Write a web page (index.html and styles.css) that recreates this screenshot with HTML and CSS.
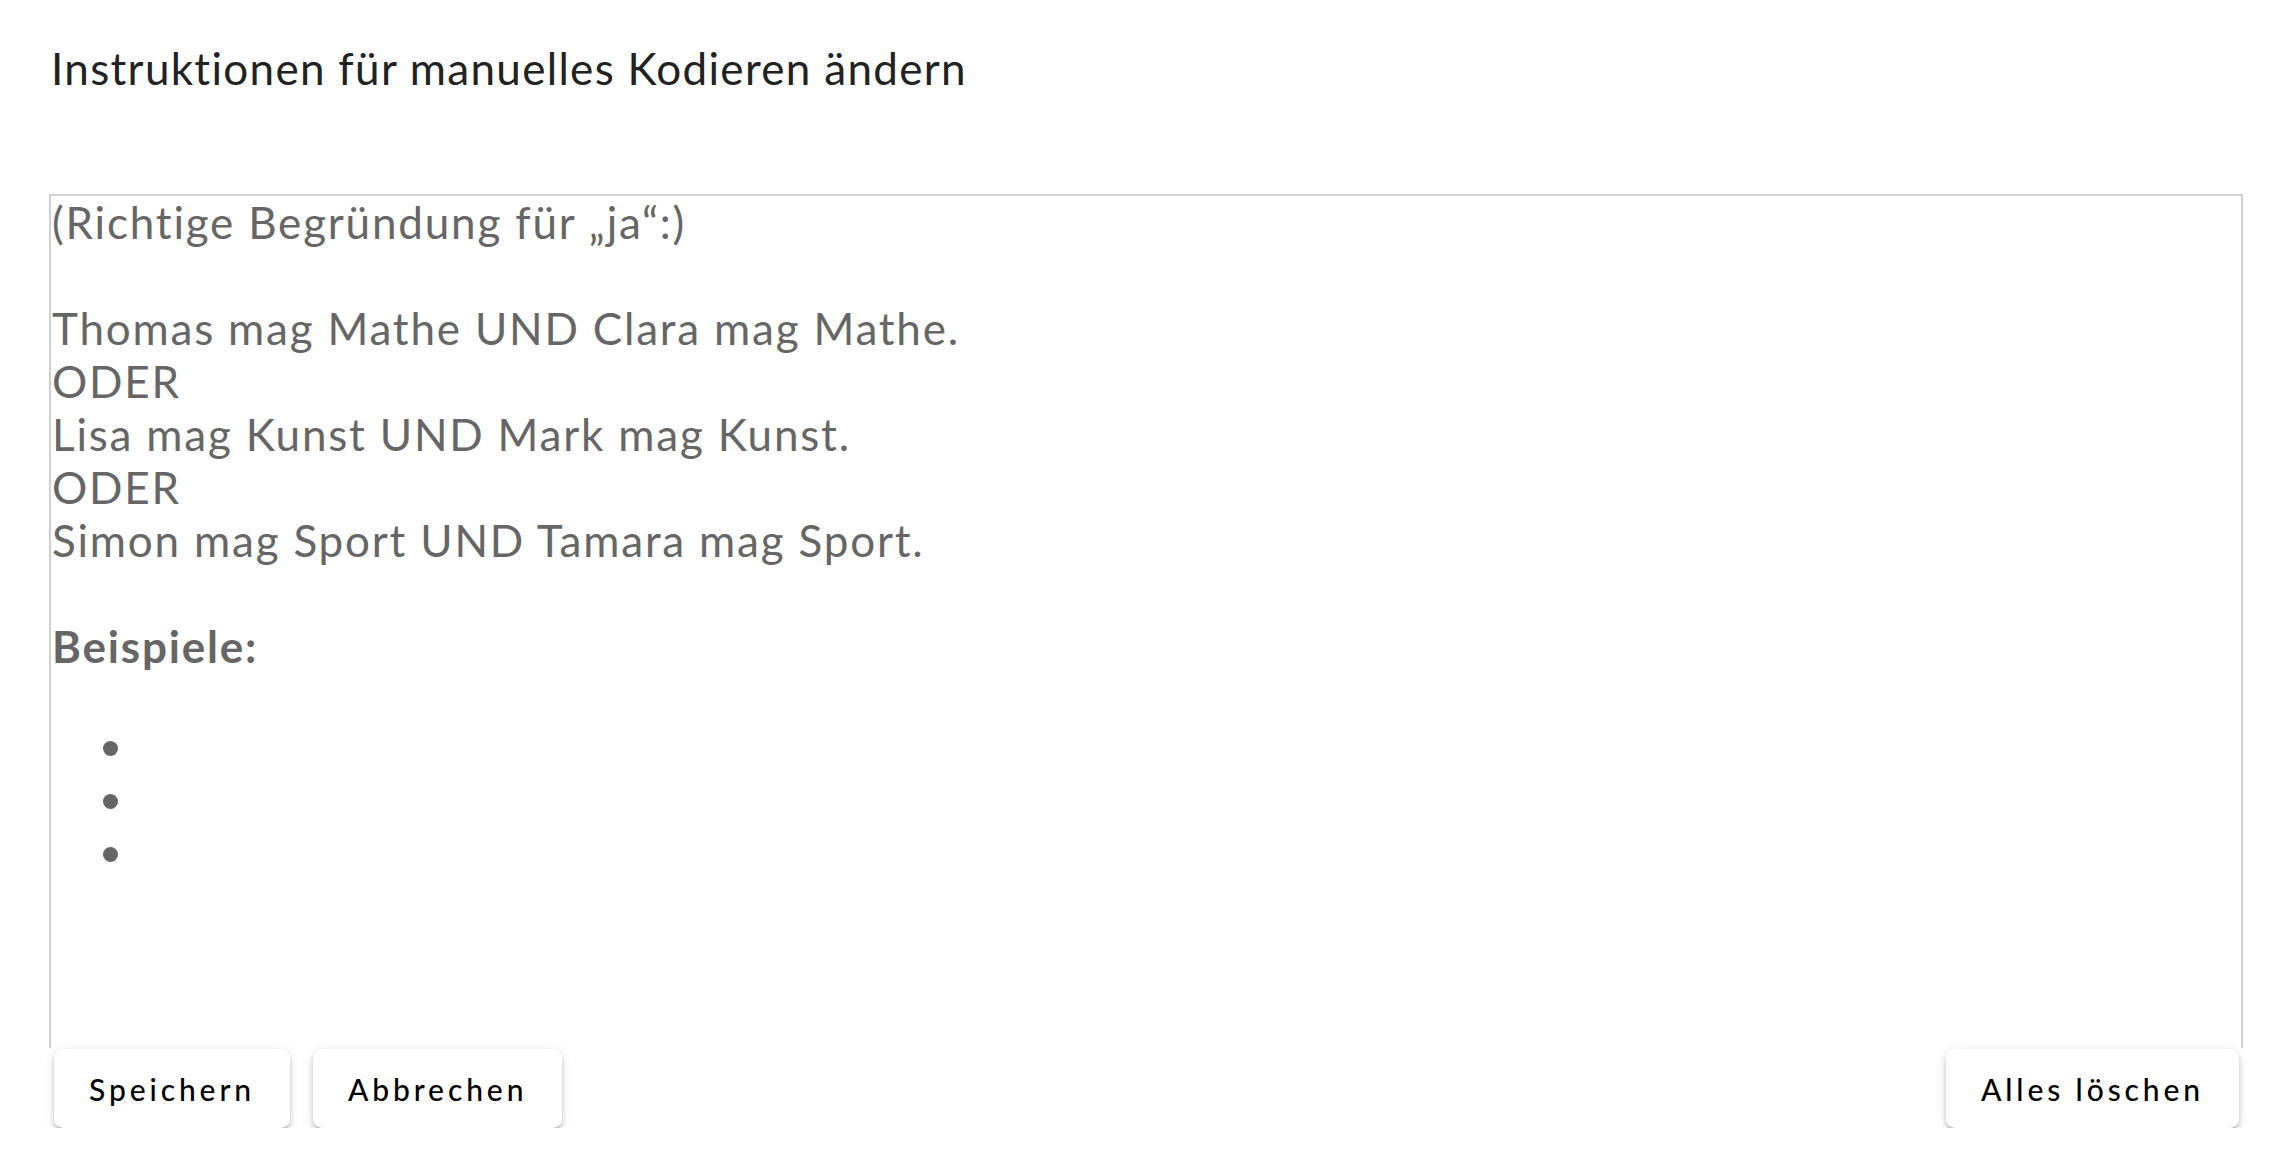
FILE: index.html
```html
<!DOCTYPE html>
<html lang="de">
<head>
<meta charset="utf-8">
<title>Instruktionen für manuelles Kodieren ändern</title>
<link rel="stylesheet" href="styles.css">
</head>
<body>
<div class="page">
  <h1 class="title">Instruktionen für manuelles Kodieren ändern</h1>
  <div class="editor">
    <p>(Richtige Begründung für „ja“:)</p>
    <p><br></p>
    <p>Thomas mag Mathe UND Clara mag Mathe.</p>
    <p>ODER</p>
    <p>Lisa mag Kunst UND Mark mag Kunst.</p>
    <p>ODER</p>
    <p>Simon mag Sport UND Tamara mag Sport.</p>
    <p><br></p>
    <p><strong>Beispiele:</strong></p>
    <ul class="list">
      <li><br></li>
      <li><br></li>
      <li><br></li>
    </ul>
  </div>
  <div class="actions">
    <div class="group">
      <button class="btn">Speichern</button>
      <button class="btn">Abbrechen</button>
    </div>
    <button class="btn">Alles löschen</button>
  </div>
</div>
</body>
</html>
```

FILE: styles.css
```css
html, body {
  margin: 0;
  padding: 0;
  background: #ffffff;
}

body {
  font-family: "Lato", "Noto Sans", sans-serif;
}

.page {
  padding: 0 51px 0 49px;
}

.title {
  margin: 0;
  padding-top: 42px;
  padding-left: 2px;
  height: 194px;
  box-sizing: border-box;
  font-size: 44px;
  line-height: 53px;
  font-weight: 400;
  letter-spacing: 1.3px;
  color: #222222;
}

.editor {
  border: 2px solid #d0d0d0;
  border-bottom: none;
  height: 854px;
  box-sizing: border-box;
  padding: 0 1px;
  color: #666666;
  font-size: 44px;
  line-height: 53px;
  letter-spacing: 1.8px;
  overflow: hidden;
}

.editor p {
  margin: 0;
}

.editor strong {
  font-weight: 700;
}

.list {
  margin: 53px 0 0 0;
  padding-left: 88px;
  list-style: none;
}

.list li {
  position: relative;
}

.list li::before {
  content: "";
  position: absolute;
  left: -37px;
  top: 15px;
  width: 15px;
  height: 15px;
  border-radius: 50%;
  background: #666666;
}

.actions {
  display: flex;
  justify-content: space-between;
  padding: 1px 4px 0 5px;
}

.group {
  display: flex;
  gap: 23px;
}

.btn {
  height: 79px;
  padding: 0 35px;
  border: none;
  border-radius: 9px;
  background: #ffffff;
  color: #000000;
  font-family: "Lato", "Noto Sans", sans-serif;
  font-size: 30px;
  font-weight: 500;
  letter-spacing: 3.9px;
  box-shadow: 0 6px 3px -4px rgba(0,0,0,0.22), 0 4px 5px 0 rgba(0,0,0,0.16), 0 2px 12px 0 rgba(0,0,0,0.12);
  cursor: pointer;
}
```
